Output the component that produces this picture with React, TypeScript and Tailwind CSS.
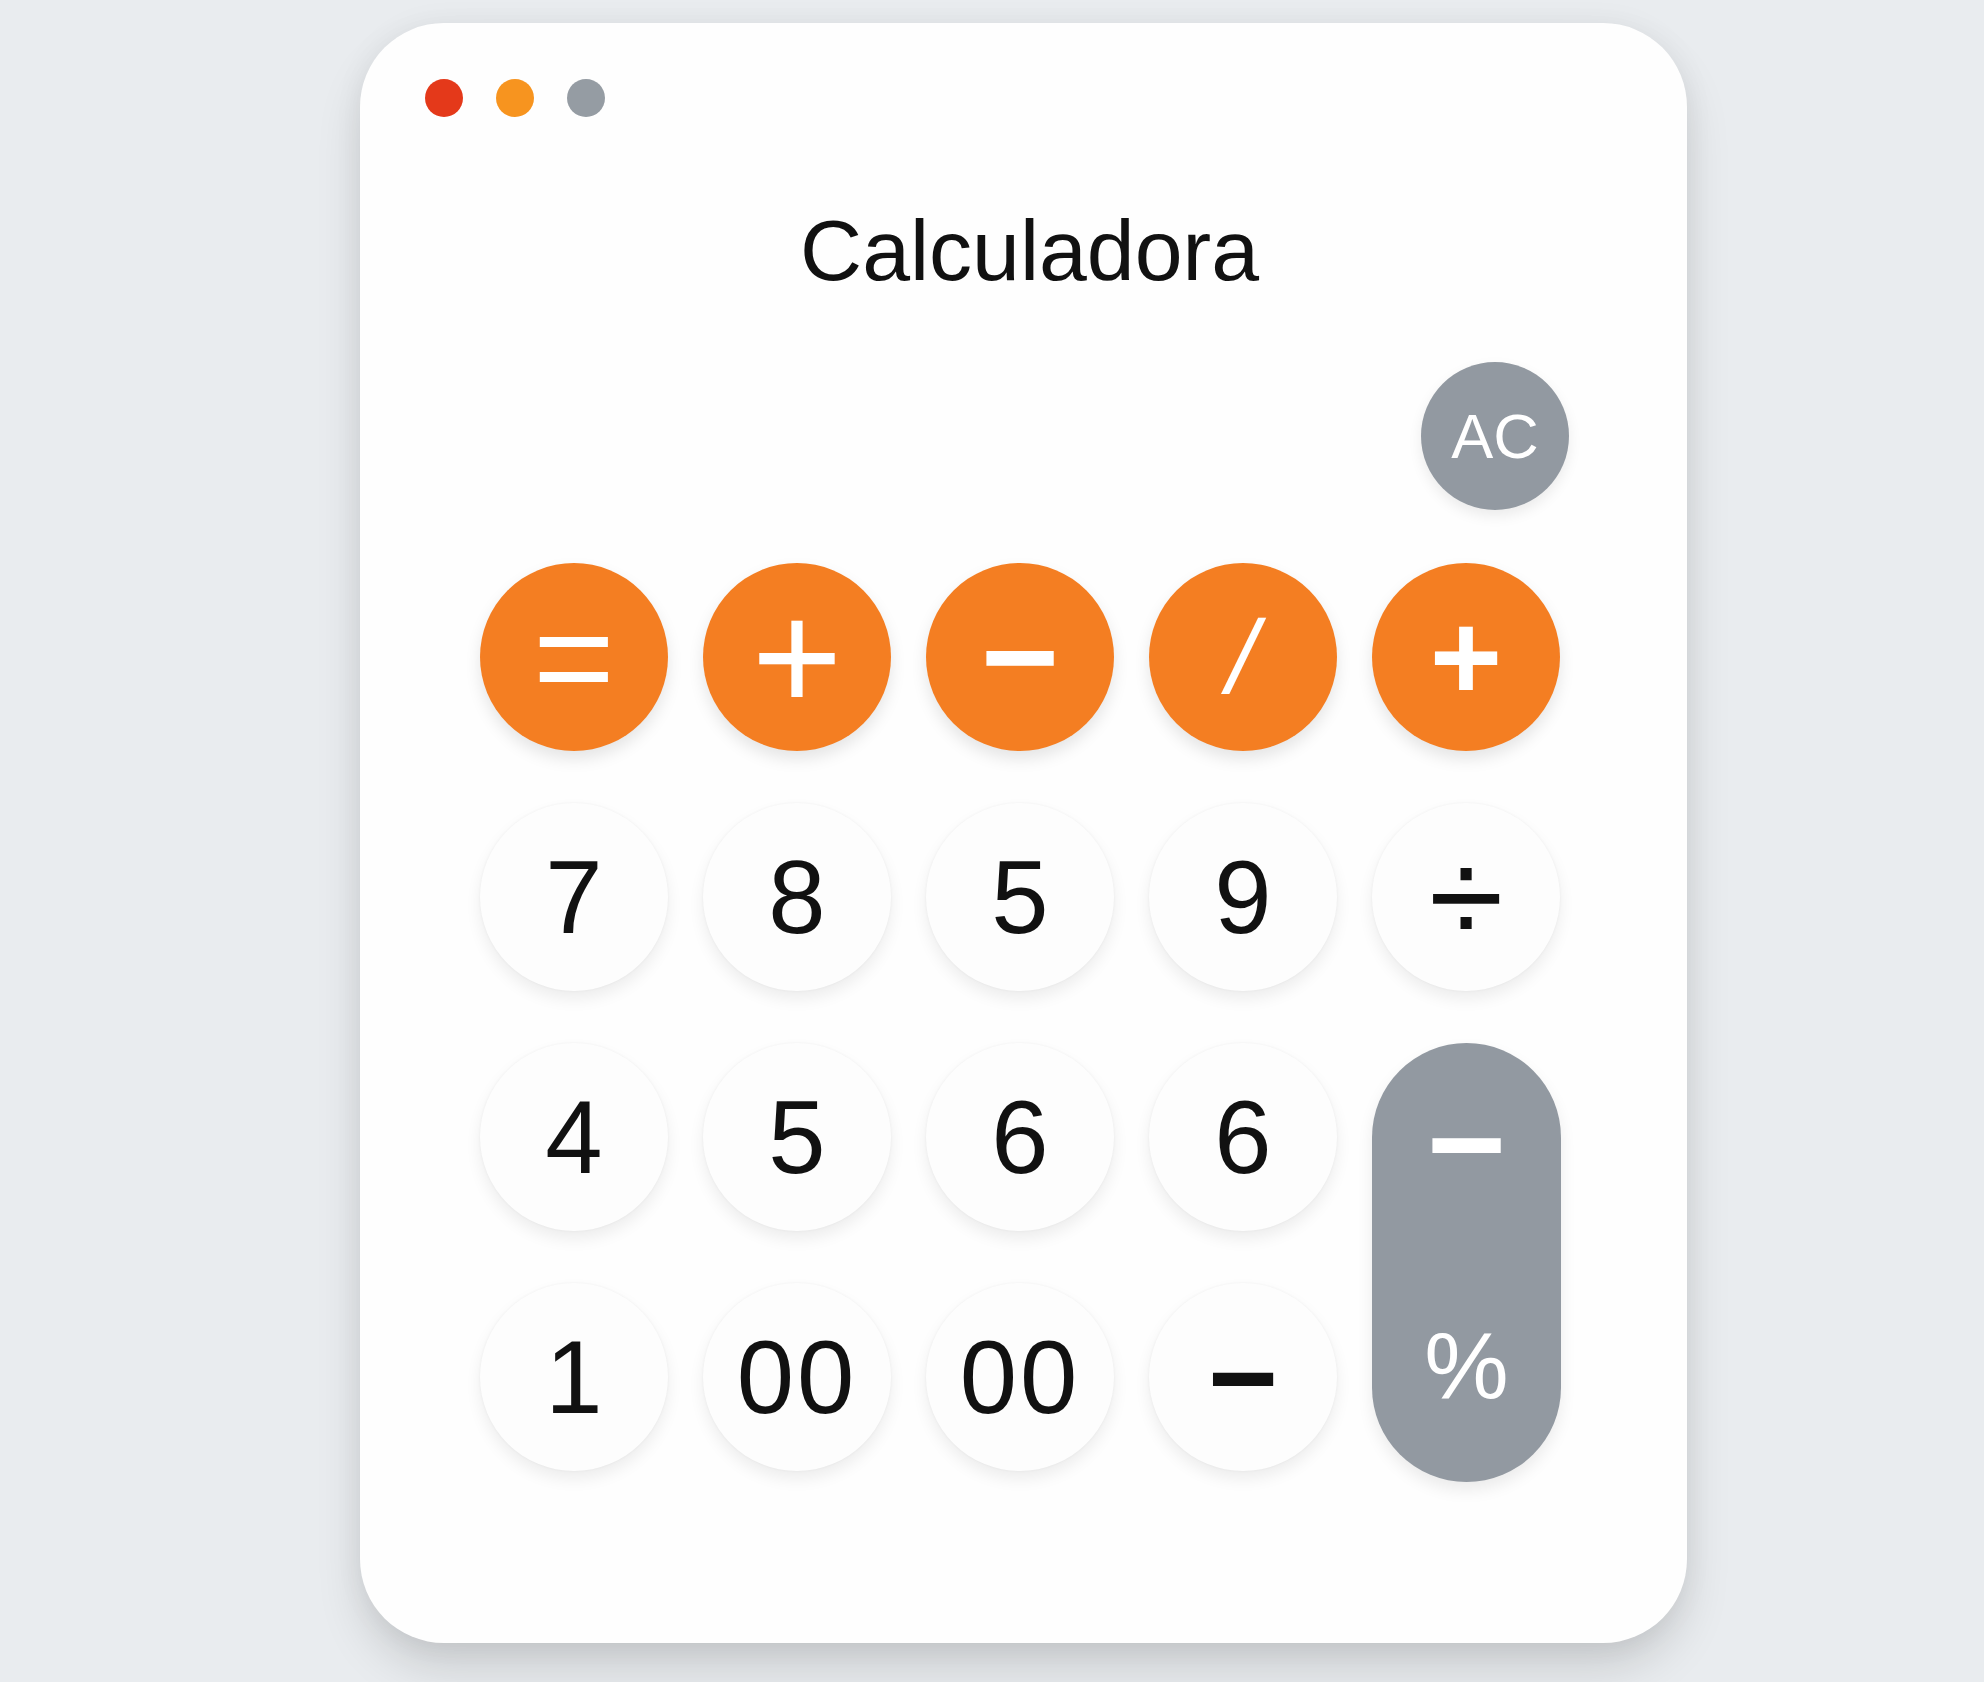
import React from "react";

const whiteBtn =
  "flex items-center justify-center rounded-full bg-[#fdfdfd] text-[#111111] shadow-[0_8px_16px_rgba(0,0,0,0.07),0_0_3px_rgba(0,0,0,0.05)]";
const orangeBtn =
  "flex items-center justify-center rounded-full bg-[#f47e22] text-white shadow-[0_8px_16px_rgba(0,0,0,0.10)]";

export default function App() {
  return (
    <div className="min-h-[1682px] w-full bg-[#e9ecef] pt-[23px] pl-[360px] font-['Liberation_Sans',Arial,sans-serif]">
      <div className="flex h-[1620px] w-[1327px] flex-col rounded-[84px] bg-[#fefefe] shadow-[0_26px_50px_-6px_rgba(0,0,0,0.16),0_0_30px_rgba(0,0,0,0.05)]">
        {/* window controls */}
        <div className="flex gap-[33px] pt-[56px] pl-[65px]">
          <span className="h-[38px] w-[38px] rounded-full bg-[#e4391a]" />
          <span className="h-[38px] w-[38px] rounded-full bg-[#f7941f]" />
          <span className="h-[38px] w-[38px] rounded-full bg-[#959ca3]" />
        </div>

        {/* title */}
        <h1 className="mt-[90px] h-[86px] pl-[12px] text-center text-[86px] leading-none font-normal text-[#111111]">
          Calculadora
        </h1>

        {/* AC */}
        <div className="mt-[69px] flex justify-end pr-[118px]">
          <button className="flex h-[148px] w-[148px] items-center justify-center rounded-full bg-[#9299a1] text-[63px] leading-none text-white shadow-[0_6px_14px_rgba(0,0,0,0.08)]">
            AC
          </button>
        </div>

        {/* keypad */}
        <div className="mt-[53px] pl-[120px]">
          <div className="grid grid-cols-[repeat(5,188px)] auto-rows-[188px] gap-x-[35px] gap-y-[52px]">
            {/* row 1 */}
            <button className={orangeBtn + " text-[140px] leading-none"}>=</button>
            <button className={orangeBtn + " text-[155px] leading-none"}>+</button>
            <button className={orangeBtn + " text-[134px] leading-none font-bold"}>−</button>
            <button className={orangeBtn + " text-[104px] leading-none"}>
              <span className="inline-block -skew-x-12">/</span>
            </button>
            <button className={orangeBtn + " text-[124px] leading-none font-bold"}>+</button>

            {/* row 2 */}
            <button className={whiteBtn + " text-[103px] leading-none"}>7</button>
            <button className={whiteBtn + " text-[103px] leading-none"}>8</button>
            <button className={whiteBtn + " text-[103px] leading-none"}>5</button>
            <button className={whiteBtn + " text-[103px] leading-none"}>9</button>
            <button className={whiteBtn + " text-[136px] leading-none"}>÷</button>

            {/* row 3 */}
            <button className={whiteBtn + " text-[103px] leading-none"}>4</button>
            <button className={whiteBtn + " text-[103px] leading-none"}>5</button>
            <button className={whiteBtn + " text-[103px] leading-none"}>6</button>
            <button className={whiteBtn + " text-[103px] leading-none"}>6</button>
            <button className="row-span-2 flex h-[439px] w-[189px] flex-col items-center self-start rounded-full bg-[#9299a1] text-white shadow-[0_8px_16px_rgba(0,0,0,0.08)]">
              <span className="mt-[51px] flex h-[100px] items-center justify-center text-[136px] leading-none font-bold">−</span>
              <span className="mt-[121px] flex h-[100px] items-center justify-center text-[95px] leading-none">%</span>
            </button>

            {/* row 4 */}
            <button className={whiteBtn + " text-[103px] leading-none"}>1</button>
            <button className={whiteBtn + " text-[103px] leading-none tracking-[0.03em]"}>00</button>
            <button className={whiteBtn + " text-[103px] leading-none tracking-[0.03em]"}>00</button>
            <button className={whiteBtn + " text-[120px] leading-none font-bold"}>−</button>
          </div>
        </div>
      </div>
    </div>
  );
}
